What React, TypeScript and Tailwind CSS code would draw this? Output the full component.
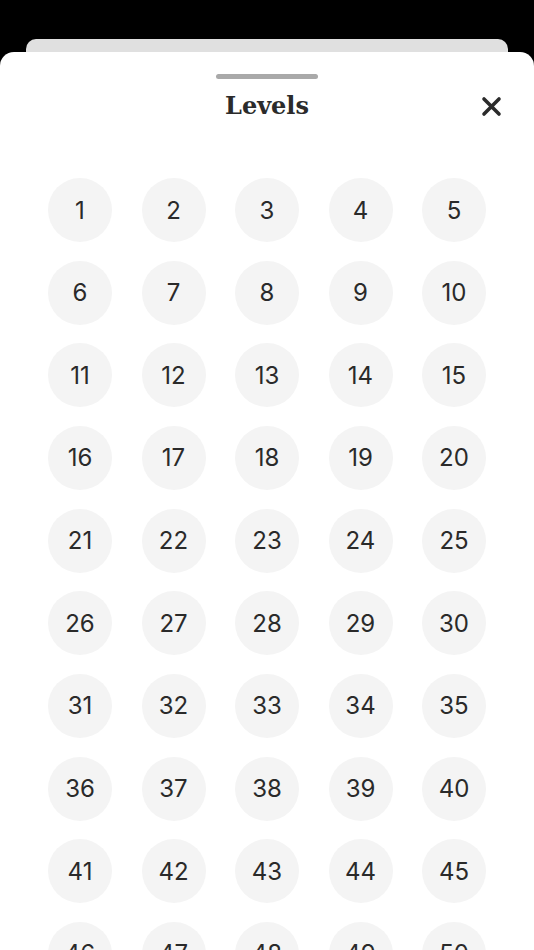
const levels = Array.from({ length: 50 }, (_, i) => i + 1)

export default function App() {
  return (
    <div className="h-[950px] overflow-hidden bg-black pt-[39px] flex flex-col">
      <div className="mx-[26px] h-[13px] shrink-0 rounded-t-[10px] bg-[#e0e0e0]" />
      <div className="flex-1 rounded-t-[14px] bg-white">
        <div className="mx-auto mt-[22px] h-[5px] w-[102px] rounded-full bg-[#a9a9a9]" />
        <div className="relative mt-[7px] flex h-[40px] items-center justify-center">
          <h1 className="text-[24px] font-bold text-[#2b2b2b]" style={{ fontFamily: '"DejaVu Serif", serif' }}>Levels</h1>
          <button className="absolute left-[481px] top-[10px] text-[#2b2b2b]">
            <svg width="21" height="21" viewBox="0 0 21 21" fill="none" stroke="currentColor" strokeWidth="3.6" strokeLinecap="round">
              <path d="M3 3L18 18M18 3L3 18" />
            </svg>
          </button>
        </div>
        <div className="mt-[52px] grid grid-cols-[repeat(5,64px)] justify-between gap-y-[18.67px] px-[48px]">
          {levels.map((n) => (
            <button key={n} className="flex h-[64px] w-[64px] items-center justify-center rounded-full bg-[#f4f4f4] pt-[1px] text-[24px] text-[#2a2a2a]" style={{ fontFamily: "Inter, sans-serif" }}>
              {n}
            </button>
          ))}
        </div>
      </div>
    </div>
  )
}
